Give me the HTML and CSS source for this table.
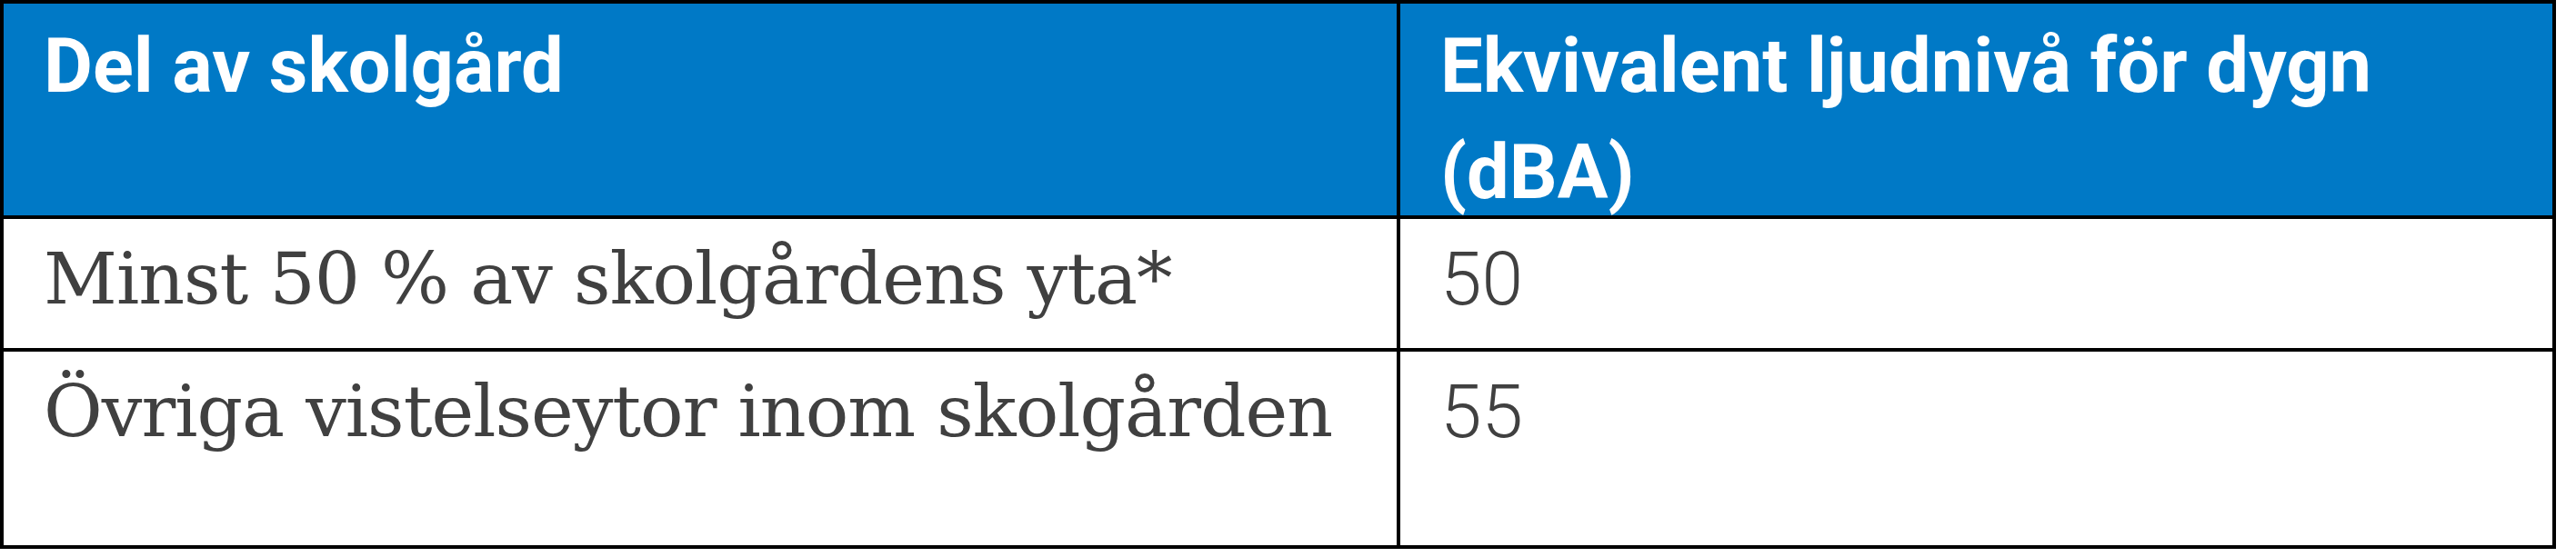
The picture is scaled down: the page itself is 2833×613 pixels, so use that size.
FILE: index.html
```html
<!DOCTYPE html>
<html lang="sv">
<head>
<meta charset="utf-8">
<title>Ljudnivå skolgård</title>
<link rel="stylesheet" href="styles.css">
</head>
<body>
<table class="noise-table">
  <thead>
    <tr>
      <th class="col-part"><div class="head-text">Del av skolgård</div></th>
      <th class="col-level"><div class="head-text">Ekvivalent ljudnivå för dygn (dBA)</div></th>
    </tr>
  </thead>
  <tbody>
    <tr class="row-first">
      <td class="col-part part-text">Minst 50 % av skolgårdens yta*</td>
      <td class="col-level level-text">50</td>
    </tr>
    <tr class="row-last">
      <td class="col-part part-text">Övriga vistelseytor inom skolgården</td>
      <td class="col-level level-text">55</td>
    </tr>
  </tbody>
</table>
</body>
</html>
```

FILE: styles.css
```css
html, body {
  margin: 0;
  padding: 0;
  background: #ffffff;
}

.noise-table {
  border-collapse: separate;
  border-spacing: 0;
  table-layout: fixed;
  width: 2811px;
  border: 4px solid #000000;
}

.noise-table th,
.noise-table td {
  box-sizing: border-box;
  vertical-align: top;
  text-align: left;
  padding: 0 0 0 44px;
  line-height: 117px;
}

.noise-table th {
  background: #0079c6;
  color: #ffffff;
  font-family: Roboto, "Liberation Sans", sans-serif;
  font-weight: 700;
  font-size: 83px;
  height: 237px;
  padding-top: 10px;
  border-bottom: 4px solid #000000;
}

.head-text {
  height: 223px;
}

.col-part {
  width: 1536px;
  border-right: 4px solid #000000;
}

.col-level {
  width: 1267px;
}

.row-first td {
  height: 146px;
  border-bottom: 4px solid #000000;
  padding-top: 8px;
}

.row-last td {
  height: 213px;
  padding-top: 8px;
}

.part-text {
  font-family: "DejaVu Serif", "Liberation Serif", serif;
  font-weight: 400;
  font-size: 79px;
  letter-spacing: -1px;
  color: #404040;
  white-space: nowrap;
}

.level-text {
  font-family: Roboto, "Liberation Sans", sans-serif;
  font-weight: 300;
  font-size: 82px;
  color: #404040;
}
```
